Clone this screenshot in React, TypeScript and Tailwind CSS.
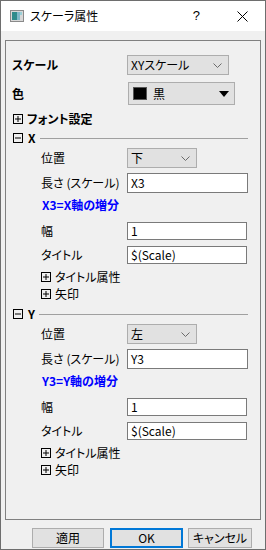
import type { ReactNode } from "react";

const jp = "font-['Noto_Sans_CJK_JP','Noto_Sans',sans-serif] [font-feature-settings:'palt']";

function Box({ open }: { open?: boolean }) {
  return (
    <svg width="10" height="10" viewBox="0 0 10 10" className="shrink-0">
      <rect x="0.5" y="0.5" width="9" height="9" fill="none" stroke="#000" />
      <line x1="2" y1="5" x2="8" y2="5" stroke="#000" />
      {!open && <line x1="5" y1="2" x2="5" y2="8" stroke="#000" />}
    </svg>
  );
}

function Chevron() {
  return (
    <svg width="9" height="5" viewBox="0 0 9 5" className="shrink-0">
      <polyline points="0.5,0.5 4.5,4.5 8.5,0.5" fill="none" stroke="#6b6b6b" strokeWidth="1" />
    </svg>
  );
}

function Select({ value, width }: { value: string; width: string }) {
  return (
    <div className={`flex h-[20px] ${width} items-center justify-between border border-[#adadad] bg-[#e1e1e1] pl-[3px] pr-[6px] text-[12px] text-black`}>
      <span>{value}</span>
      <Chevron />
    </div>
  );
}

function Input({ value, width, height }: { value: string; width: string; height: string }) {
  return (
    <div className={`flex ${height} ${width} items-center border border-[#7a7a7a] bg-white pl-[3px] text-[12px] text-black`}>
      {value}
    </div>
  );
}

function Row({ label, mt, h, children }: { label: string; mt: string; h: string; children: ReactNode }) {
  return (
    <div className={`${mt} flex ${h} items-center pl-[35px]`}>
      <span className="w-[86px] text-[12px] text-black">{label}</span>
      {children}
    </div>
  );
}

function Expander({ label, mt }: { label: string; mt: string }) {
  return (
    <div className={`${mt} flex h-4 items-center gap-[4px] pl-[35px] text-[12px] text-black`}>
      <Box />
      <span>{label}</span>
    </div>
  );
}

function AxisSection({ axis, pos, mt }: { axis: string; pos: string; mt: string }) {
  return (
    <>
      <div className={`${mt} flex h-4 items-center pl-[7px] pr-[12px]`}>
        <Box open />
        <span className="ml-[5px] text-[12px] font-bold text-black">{axis}</span>
        <div className="ml-[4px] h-px flex-1 bg-[#a0a0a0]" />
      </div>
      <Row label="位置" mt="mt-[2px]" h="h-[20px]">
        <Select value={pos} width="w-[70px]" />
      </Row>
      <Row label="長さ (スケール)" mt="mt-[5px]" h="h-[20px]">
        <Input value={`${axis}3`} width="w-[121px]" height="h-[20px]" />
      </Row>
      <div className="mt-[4px] flex h-4 items-center pl-[36px] text-[12px] font-bold text-[#0000ff]">
        {axis}3={axis}軸の増分
      </div>
      <Row label="幅" mt="mt-[9px]" h="h-[18px]">
        <Input value="1" width="w-[120px]" height="h-[18px]" />
      </Row>
      <Row label="タイトル" mt="mt-[6px]" h="h-[18px]">
        <Input value="$(Scale)" width="w-[120px]" height="h-[18px]" />
      </Row>
      <Expander label="タイトル属性" mt="mt-[5px]" />
      <Expander label="矢印" mt="mt-[1px]" />
    </>
  );
}

export default function App() {
  return (
    <div className={`${jp} flex h-[550px] w-[266px] flex-col border border-[#6e6e6e] bg-[#f0f0f0]`}>
      {/* タイトルバー */}
      <div className="flex h-[30px] shrink-0 items-center bg-white">
        <svg width="14" height="12" viewBox="0 0 14 12" className="ml-[9px]">
          <rect x="0.5" y="0.5" width="13" height="11" fill="#d8d8d8" stroke="#8a8a8a" />
          <rect x="2" y="2" width="5" height="8" fill="#2e8b8b" />
          <rect x="7" y="2" width="3" height="8" fill="#7fb8c8" />
          <rect x="10" y="2" width="2" height="3" fill="#9ad0d8" />
        </svg>
        <span className="ml-[6px] text-[12px] text-black">スケーラ属性</span>
        <span className="ml-auto mr-[37px] font-['Liberation_Sans',sans-serif] text-[13px] text-black">?</span>
        <svg width="11" height="11" viewBox="0 0 11 11" className="mr-[17px]">
          <line x1="0.5" y1="0.5" x2="10.5" y2="10.5" stroke="#000" />
          <line x1="10.5" y1="0.5" x2="0.5" y2="10.5" stroke="#000" />
        </svg>
      </div>

      {/* パネル */}
      <div className="mx-[4px] mt-[9px] h-[480px] shrink-0 border border-[#808080]">
        <div className="mt-[14px] flex h-[20px] items-center pl-[6px]">
          <span className="w-[115px] text-[12px] font-bold text-black">スケール</span>
          <Select value="XYスケール" width="w-[102px]" />
        </div>
        <div className="mt-[7px] flex h-[23px] items-center pl-[6px]">
          <span className="w-[116px] text-[12px] font-bold text-black">色</span>
          <div className="flex h-[23px] w-[107px] items-center border border-[#adadad] bg-[#e1e1e1] pl-[4px] pr-[5px] text-[12px] text-black">
            <div className="h-[13px] w-[14px] border border-[#555] bg-black" />
            <span className="ml-[6px]">黒</span>
            <svg width="10" height="6" viewBox="0 0 10 6" className="ml-auto">
              <polygon points="0,0 10,0 5,6" fill="#000" />
            </svg>
          </div>
        </div>
        <div className="mt-[6px] flex h-4 items-center pl-[7px]">
          <Box />
          <span className="ml-[4px] text-[12px] font-bold text-black">フォント設定</span>
        </div>
        <AxisSection axis="X" pos="下" mt="mt-[3px]" />
        <AxisSection axis="Y" pos="左" mt="mt-[4px]" />
      </div>

      {/* ボタン */}
      <div className="mt-[8px] flex h-[20px] pl-[31px]">
        <button className="flex h-[20px] w-[72px] items-center justify-center border border-[#adadad] bg-[#e1e1e1] text-[12px] text-black">
          適用
        </button>
        <button className="ml-[6px] flex h-[20px] w-[73px] items-center justify-center border-2 border-[#0078d7] bg-[#e1e1e1] text-[12px] text-black">
          OK
        </button>
        <button className="ml-[5px] flex h-[20px] w-[64px] items-center justify-center border border-[#adadad] bg-[#e1e1e1] text-[12px] text-black">
          キャンセル
        </button>
      </div>
    </div>
  );
}
